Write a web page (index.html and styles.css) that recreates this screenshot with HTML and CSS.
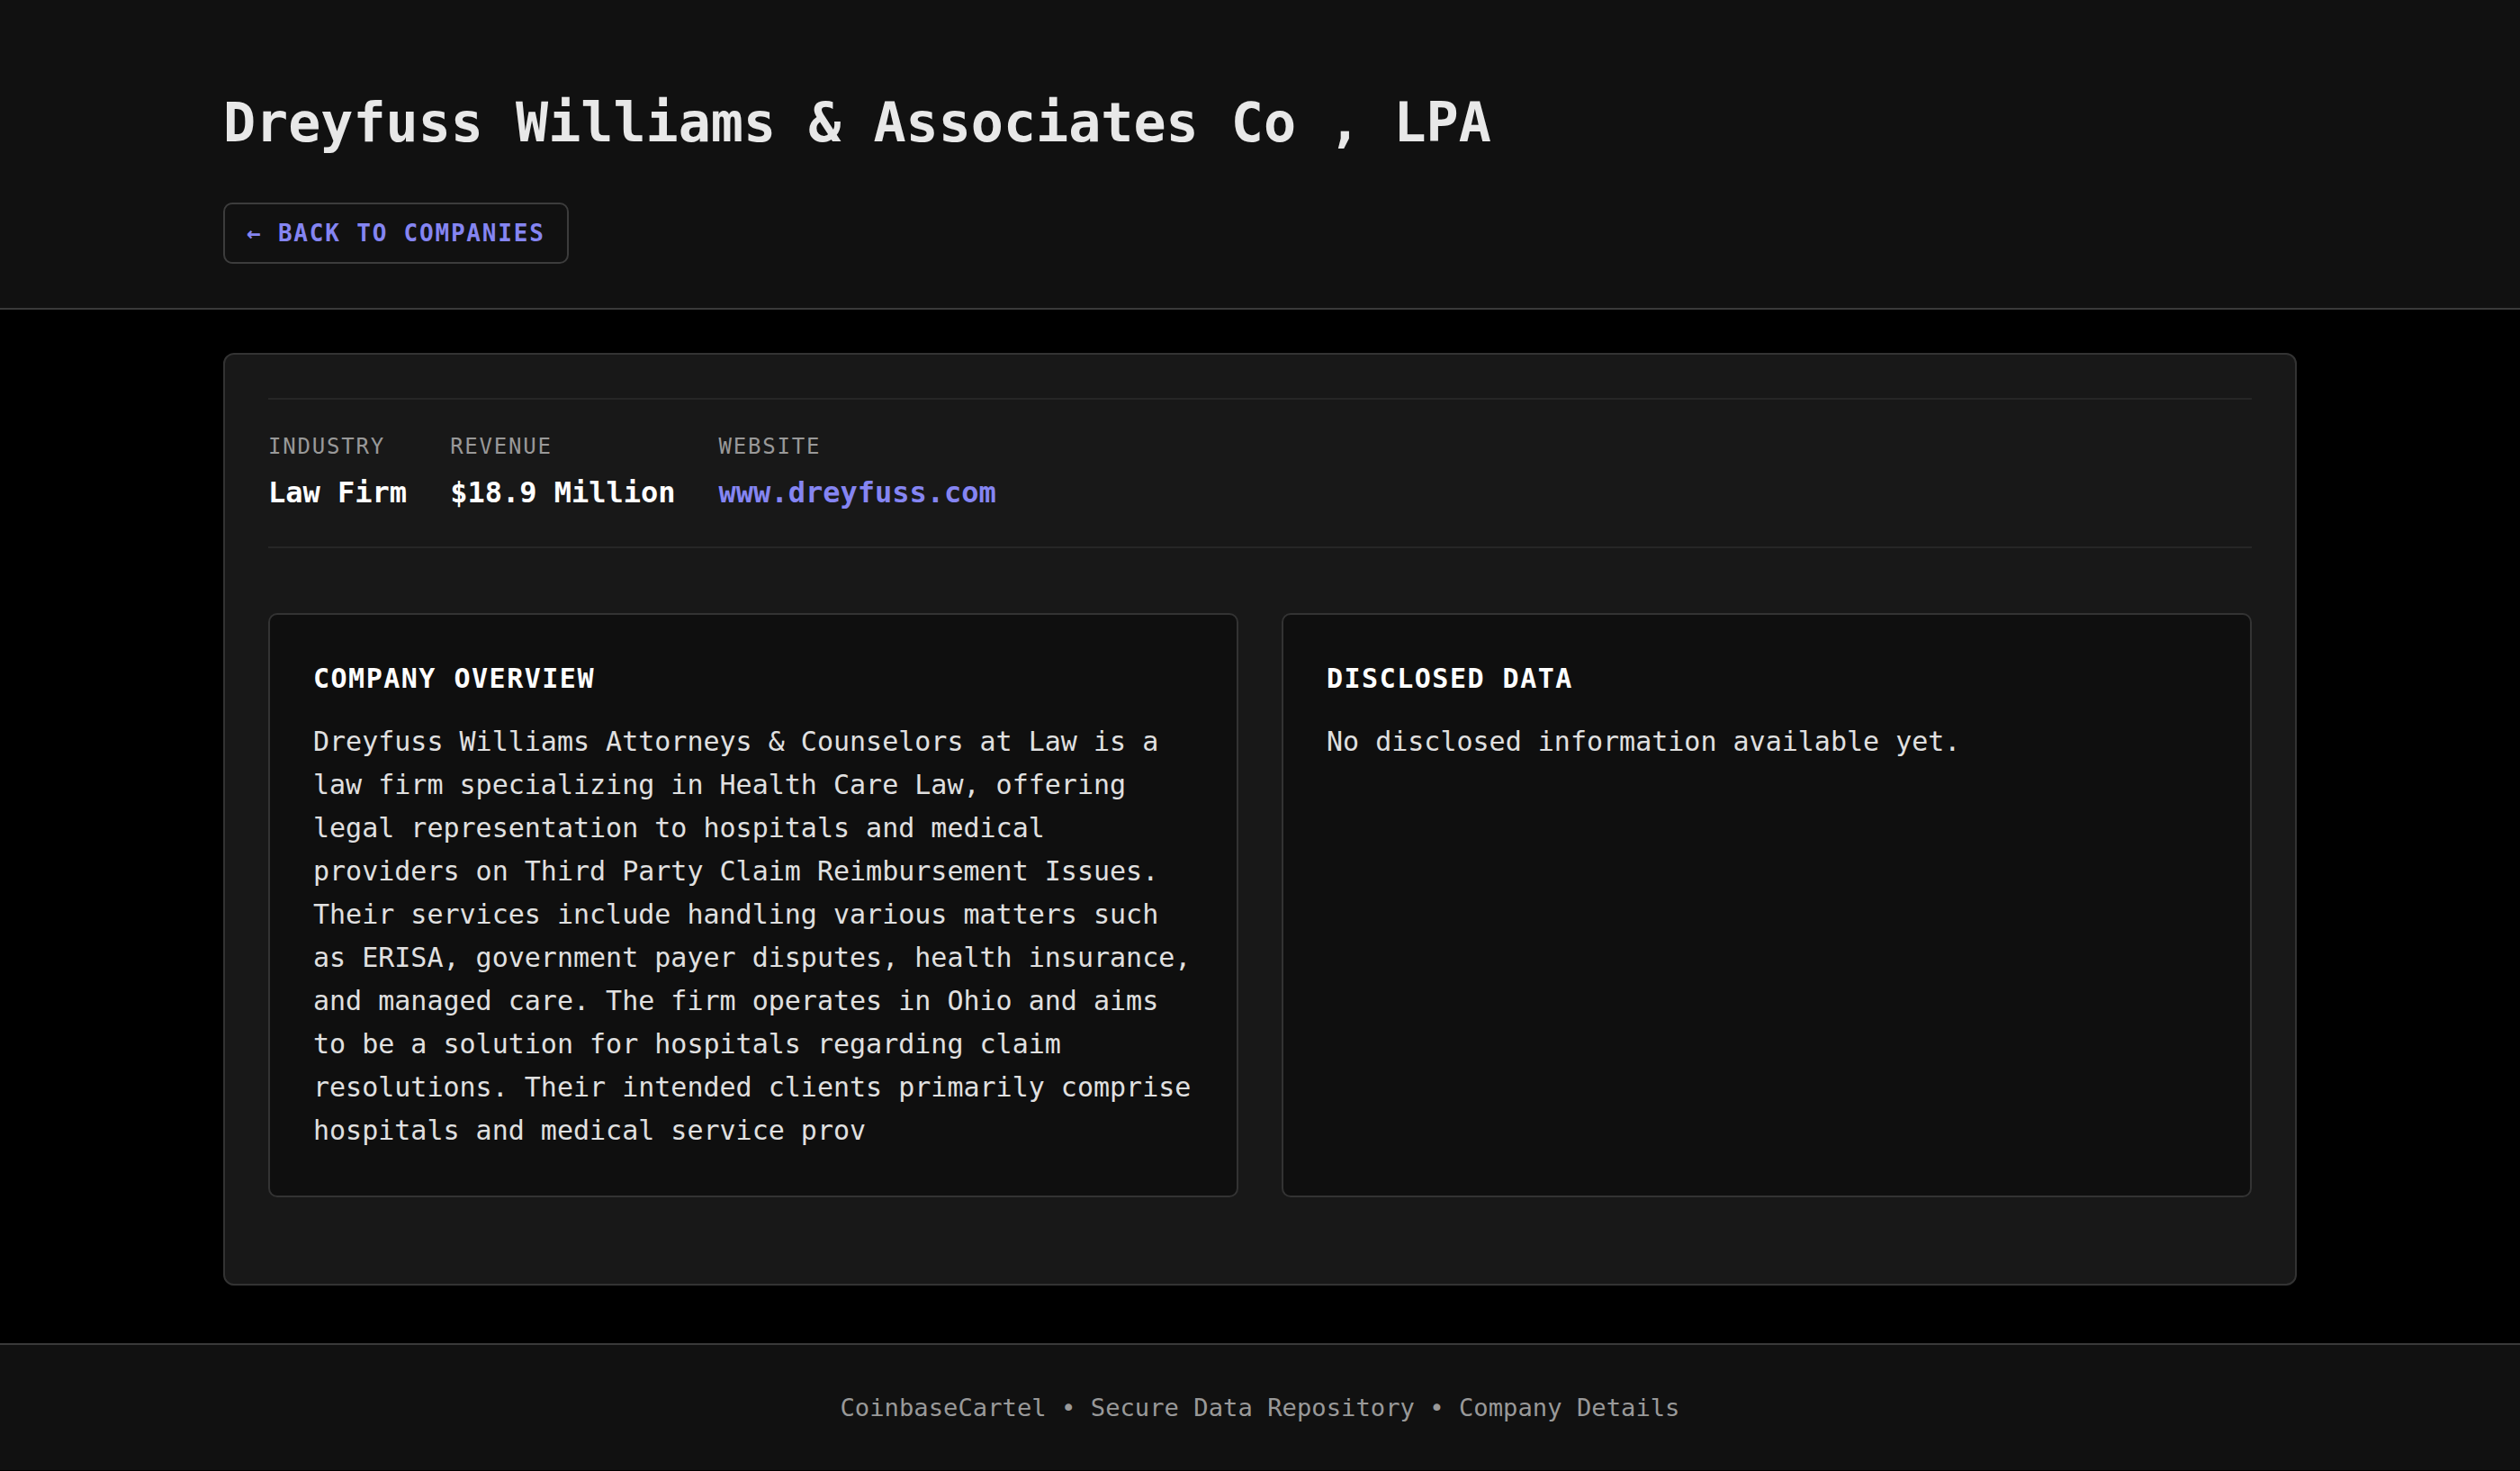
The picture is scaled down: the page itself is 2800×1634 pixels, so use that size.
FILE: index.html
```html
<!DOCTYPE html>
<html lang="en">
<head>
    <meta charset="UTF-8">
    <meta name="viewport" content="width=device-width, initial-scale=1.0">
    <title>Dreyfuss Williams &amp; Associates Co , LPA</title>
    <link rel="stylesheet" href="styles.css">
</head>
<body>
    <header class="top">
        <div class="wrap">
            <h1 class="title">Dreyfuss Williams &amp; Associates Co , LPA</h1>
            <a class="back" href="#">&larr; Back to companies</a>
        </div>
    </header>

    <main class="main">
        <div class="wrap card">
            <div class="meta">
                <div class="meta-item">
                    <div class="label">Industry</div>
                    <div class="value">Law Firm</div>
                </div>
                <div class="meta-item">
                    <div class="label">Revenue</div>
                    <div class="value">$18.9 Million</div>
                </div>
                <div class="meta-item">
                    <div class="label">Website</div>
                    <a class="value link" href="#">www.dreyfuss.com</a>
                </div>
            </div>

            <div class="panels">
                <section class="panel">
                    <h2>Company Overview</h2>
                    <p>Dreyfuss Williams Attorneys &amp; Counselors at Law is a law firm specializing in Health Care Law, offering legal representation to hospitals and medical providers on Third Party Claim Reimbursement Issues. Their services include handling various matters such as ERISA, government payer disputes, health insurance, and managed care. The firm operates in Ohio and aims to be a solution for hospitals regarding claim resolutions. Their intended clients primarily comprise hospitals and medical service prov</p>
                </section>
                <section class="panel">
                    <h2>Disclosed Data</h2>
                    <p>No disclosed information available yet.</p>
                </section>
            </div>
        </div>
    </main>

    <footer class="foot">
        CoinbaseCartel &bull; Secure Data Repository &bull; Company Details
    </footer>
</body>
</html>
```

FILE: styles.css
```css
*{
    margin:0;
    padding:0;
    box-sizing: border-box;
}
body{
    background-color: #000;
    color: #e0e0e0;
    font-family: "DejaVu Sans Mono", "Liberation Mono", monospace;
    font-size: 30px;
    line-height: 1.6;
}
.wrap{
    width: 2304px;
    margin: 0 auto;
}

/* 头部 */
.top{
    background-color: #111;
    border-bottom: 2px solid #3a3a3a;
    padding: 100px 0 49px;
}
.title{
    font-size: 60px;
    line-height: 72px;
    font-weight: bold;
    color: #e8e8e8;
    margin-bottom: 53px;
}
.back{
    display: inline-block;
    height: 68px;
    padding: 0 24px;
    border: 2px solid #3c3c3c;
    border-radius: 10px;
    color: #8585f2;
    font-size: 26px;
    line-height: 64px;
    font-weight: bold;
    letter-spacing: 1.8px;
    text-transform: uppercase;
    text-decoration: none;
}

/* 主体 */
.main{
    padding: 48px 0 64px;
}
.card{
    background-color: #181818;
    border: 2px solid #333;
    border-radius: 12px;
    padding: 48px;
}
.meta{
    display: flex;
    gap: 48px;
    border-top: 2px solid #262626;
    border-bottom: 2px solid #262626;
    padding: 34px 0;
    margin-bottom: 72px;
}
.label{
    font-size: 24px;
    line-height: 36px;
    letter-spacing: 1.8px;
    color: #999;
    text-transform: uppercase;
    margin-bottom: 8px;
}
.value{
    display: block;
    font-size: 32px;
    line-height: 51px;
    font-weight: bold;
    color: #fff;
}
.link{
    color: #8585f2;
    text-decoration: none;
}

.panels{
    display: grid;
    grid-template-columns: 1fr 1fr;
    gap: 48px;
    margin-bottom: 48px;
}
.panel{
    background-color: #0f0f0f;
    border: 2px solid #333;
    border-radius: 10px;
    padding: 48px;
}
.panel h2{
    font-size: 30px;
    line-height: 46px;
    font-weight: bold;
    letter-spacing: 1.5px;
    color: #fff;
    text-transform: uppercase;
    margin-bottom: 23px;
}
.panel p{
    line-height: 48px;
}

/* 底部 */
.foot{
    background-color: #111;
    border-top: 2px solid #3a3a3a;
    padding: 48px 0;
    text-align: center;
    font-size: 27.2px;
    line-height: 43px;
    color: #999;
}
```
